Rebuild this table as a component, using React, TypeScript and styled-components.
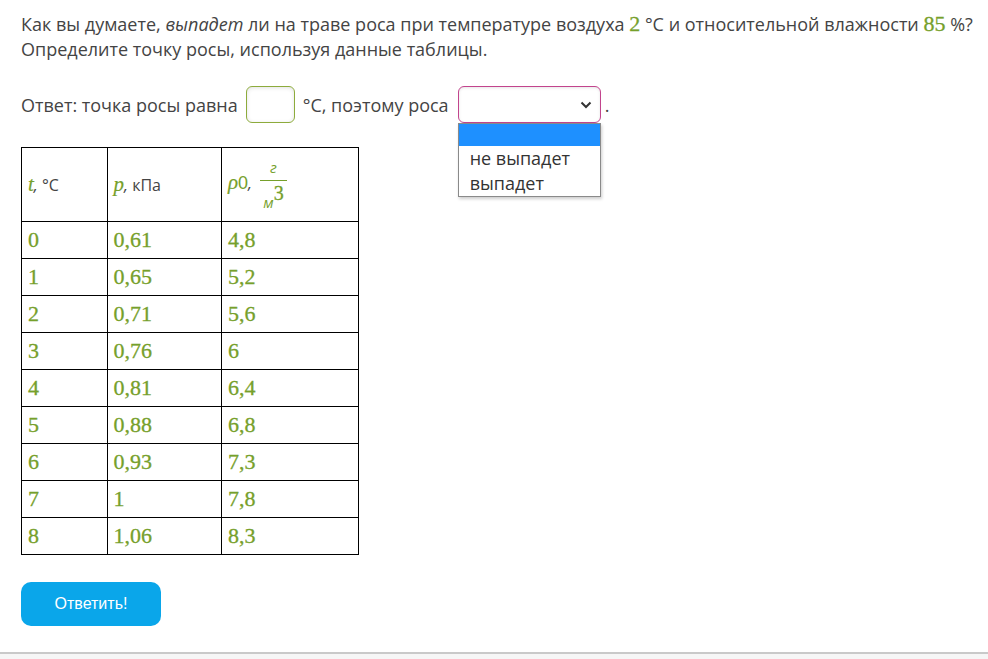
import React from 'react';
import styled, { createGlobalStyle } from 'styled-components';

const GlobalStyle = createGlobalStyle`
  html, body {
    margin: 0;
    padding: 0;
    background: #fff;
  }
  body {
    font-family: "Open Sans", "Liberation Sans", sans-serif;
    color: #444;
  }
`;

const Page = styled.div`
  height: 659px;
  display: flex;
  flex-direction: column;
  overflow: hidden;
`;

const Content = styled.div`
  flex: 1;
  padding: 11px 0 0 21px;
`;

const Question = styled.p`
  margin: 0;
  font-size: 18px;
  line-height: 25px;
  color: #444;
  white-space: nowrap;
`;

const Num = styled.span`
  font-family: "Liberation Serif", "DejaVu Serif", serif;
  font-size: 22px;
  color: #76a02b;
  -webkit-text-stroke: 0.3px #76a02b;
`;

const AnswerLine = styled.div`
  margin-top: 24px;
  display: flex;
  align-items: center;
  gap: 8px;
  font-size: 18px;
  color: #444;
`;

const NumberInput = styled.div`
  width: 47px;
  height: 35px;
  border: 1px solid #8dab3c;
  border-radius: 6px;
  box-shadow: inset 0 1px 4px rgba(0, 0, 0, 0.12);
`;

const SelectWrap = styled.div`
  position: relative;
  margin-left: 1px;
`;

const SelectBox = styled.div`
  width: 133px;
  height: 35px;
  border: 1px solid #c2448d;
  border-radius: 6px;
  box-shadow: inset 0 1px 3px rgba(0, 0, 0, 0.1);
  display: flex;
  align-items: center;
  justify-content: flex-end;
  padding-right: 8px;
`;

const Period = styled.span`
  margin-left: -4px;
`;

const DropList = styled.div`
  position: absolute;
  left: 0;
  top: 37px;
  width: 141px;
  border: 1px solid #8a8a8a;
  background: #fff;
  box-shadow: 1px 2px 3px rgba(0, 0, 0, 0.2);
  z-index: 5;
`;

const Option = styled.div<{ $active?: boolean }>`
  height: ${p => (p.$active ? '22px' : '25px')};
  line-height: 25px;
  padding-left: 11px;
  font-size: 18px;
  color: #333;
  background: ${p => (p.$active ? '#1e90ff' : '#fff')};
`;

const Table = styled.table`
  margin-top: 24px;
  border-collapse: collapse;
  table-layout: fixed;
  width: 338px;
`;

const Cell = styled.td<{ $w?: number }>`
  border: 1.5px solid #000;
  height: 36px;
  padding: 0 6px;
  vertical-align: middle;
  width: ${p => (p.$w ? p.$w + 'px' : 'auto')};
`;

const HeadCell = styled(Cell)`
  height: 72.5px;
  font-size: 16px;
  color: #444;
  white-space: nowrap;
`;

const Val = styled.span`
  font-family: "Liberation Serif", "DejaVu Serif", serif;
  font-size: 22px;
  color: #76a02b;
  -webkit-text-stroke: 0.3px #76a02b;
`;

const MathVar = styled.span`
  font-family: "Liberation Serif", "DejaVu Serif", serif;
  font-style: italic;
  font-size: 21px;
  color: #76a02b;
  -webkit-text-stroke: 0.2px #76a02b;
`;

const Comma = styled.span`
  font-style: italic;
`;

const Sub = styled.span`
  font-family: "Liberation Sans", sans-serif;
  font-size: 18px;
  color: #76a02b;
`;

const Frac = styled.span`
  display: inline-flex;
  flex-direction: column;
  align-items: center;
  vertical-align: middle;
  margin-left: 8px;
  color: #76a02b;
  font-size: 15px;
  line-height: 18px;
`;

const FracTop = styled.span`
  font-style: italic;
  padding: 0 10px 4px;
  border-bottom: 1px solid #76a02b;
`;

const FracBottom = styled.span`
  font-style: italic;
  padding-top: 12px;
  sup {
    font-family: "Liberation Serif", serif;
    font-style: normal;
    font-size: 20px;
    vertical-align: 8px;
    line-height: 0;
    -webkit-text-stroke: 0.3px #76a02b;
  }
`;

const SubmitButton = styled.button`
  margin-top: 27px;
  width: 140px;
  height: 44px;
  border: none;
  border-radius: 10px;
  background: #0aa6ea;
  color: #fff;
  font-family: "Liberation Sans", Arial, sans-serif;
  font-size: 16px;
  cursor: pointer;
`;

const Footer = styled.div`
  height: 5px;
  border-top: 2px solid #c9c9c9;
  background: #f6f6f6;
`;

const rows: [string, string, string][] = [
  ['0', '0,61', '4,8'],
  ['1', '0,65', '5,2'],
  ['2', '0,71', '5,6'],
  ['3', '0,76', '6'],
  ['4', '0,81', '6,4'],
  ['5', '0,88', '6,8'],
  ['6', '0,93', '7,3'],
  ['7', '1', '7,8'],
  ['8', '1,06', '8,3'],
];

const Chevron = () => (
  <svg width="12" height="8" viewBox="0 0 12 8">
    <path d="M1.5 1.5 L6 6 L10.5 1.5" fill="none" stroke="#333" strokeWidth="2" />
  </svg>
);

export default function App() {
  return (
    <Page>
      <GlobalStyle />
      <Content>
        <Question>
          Как вы думаете, <i>выпадет</i> ли на траве роса при температуре воздуха <Num>2</Num> °C и
          относительной влажности <Num>85</Num> %?
          <br />
          Определите точку росы, используя данные таблицы.
        </Question>
        <AnswerLine>
          <span>Ответ: точка росы равна</span>
          <NumberInput />
          <span>°C, поэтому роса</span>
          <SelectWrap>
            <SelectBox>
              <Chevron />
            </SelectBox>
            <DropList>
              <Option $active />
              <Option>не выпадет</Option>
              <Option>выпадет</Option>
            </DropList>
          </SelectWrap>
          <Period>.</Period>
        </AnswerLine>
        <Table>
          <tbody>
            <tr>
              <HeadCell $w={72.5}>
                <MathVar>t</MathVar>
                <Comma>,</Comma> °C
              </HeadCell>
              <HeadCell $w={101.5}>
                <MathVar>p</MathVar>
                <Comma>,</Comma> кПа
              </HeadCell>
              <HeadCell>
                <MathVar>ρ</MathVar>
                <Sub>0</Sub>
                <Comma>,</Comma>
                <Frac>
                  <FracTop>г</FracTop>
                  <FracBottom>
                    м<sup>3</sup>
                  </FracBottom>
                </Frac>
              </HeadCell>
            </tr>
            {rows.map(r => (
              <tr key={r[0]}>
                <Cell>
                  <Val>{r[0]}</Val>
                </Cell>
                <Cell>
                  <Val>{r[1]}</Val>
                </Cell>
                <Cell>
                  <Val>{r[2]}</Val>
                </Cell>
              </tr>
            ))}
          </tbody>
        </Table>
        <SubmitButton>Ответить!</SubmitButton>
      </Content>
      <Footer />
    </Page>
  );
}
